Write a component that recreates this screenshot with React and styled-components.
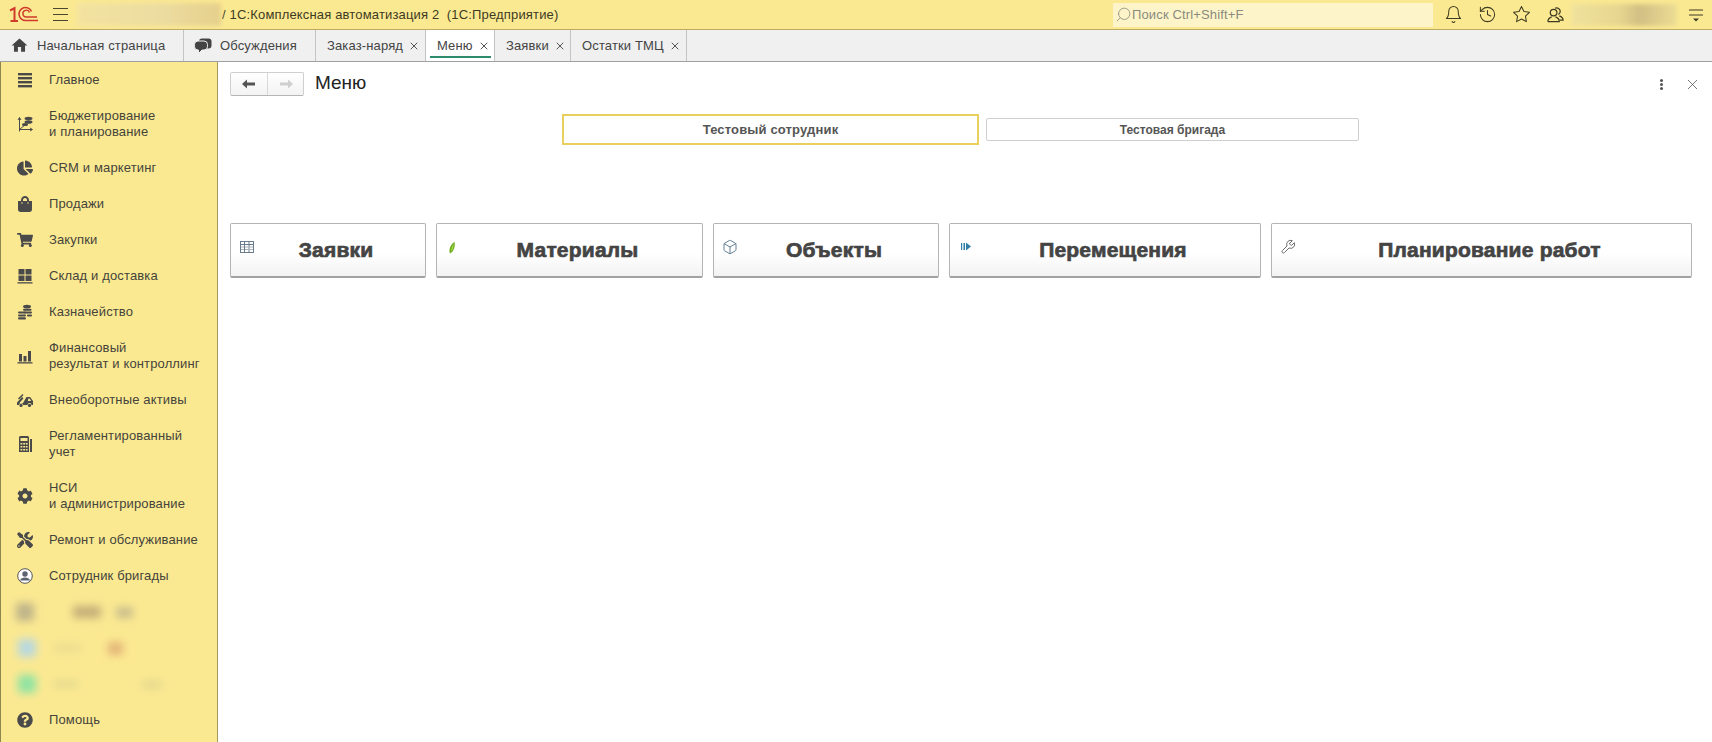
import React from "react";
import styled, { createGlobalStyle } from "styled-components";
import {
  FaChartPie, FaShoppingBag, FaShoppingCart, FaCog, FaTools, FaQuestionCircle,
} from "react-icons/fa";
import { MdHome } from "react-icons/md";
import { FiSearch, FiBell, FiStar, FiX } from "react-icons/fi";
import { LuHistory, LuWrench, LuBox } from "react-icons/lu";

const GlobalStyle = createGlobalStyle`
  html, body { margin: 0; padding: 0; height: 100%; overflow: hidden; background: #fff; }
  body { font-family: "Liberation Sans", Arial, sans-serif; font-size: 13px; color: #4a4a4a; letter-spacing: 0.14px; }
`;

const Page = styled.div`
  width: 1712px;
  height: 742px;
  display: flex;
  flex-direction: column;
  overflow: hidden;
`;

const TopBar = styled.header`
  height: 29px;
  flex: none;
  display: flex;
  align-items: center;
  background: #fbe992;
  border-bottom: 1px solid #b9ab62;
  padding-left: 8px;
  color: #3d3a22;
`;

const Logo = styled.svg`
  width: 32px;
  height: 18px;
  flex: none;
  margin-right: 13px;
`;

const Burger = styled.div`
  width: 15px;
  height: 11px;
  flex: none;
  border-top: 1px solid #4a4630;
  border-bottom: 1px solid #4a4630;
  position: relative;
  margin-right: 9px;
  &::after {
    content: "";
    position: absolute;
    left: 0;
    right: 0;
    top: 5px;
    height: 1px;
    background: #4a4630;
  }
`;

const Smudge = styled.div`
  flex: none;
  width: ${(p) => p.$w}px;
  height: ${(p) => p.$h || 23}px;
  margin-left: ${(p) => p.$left || 0}px;
  background: ${(p) => p.$bg};
  filter: blur(2px);
`;

const AppTitle = styled.div`
  margin-left: 1px;
  white-space: pre;
  flex: none;
  width: 891px;
  font-size: 13px;
  letter-spacing: 0.16px;
`;

const Search = styled.div`
  width: 320px;
  height: 24px;
  flex: none;
  display: flex;
  align-items: center;
  background: #fdf5c9;
  color: #8a8a80;
  padding-left: 2px;
  box-sizing: border-box;
  font-size: 13px;
`;

const TopIcons = styled.div`
  display: flex;
  align-items: center;
  margin-left: 11px;
  gap: 15px;
  color: #3d3a22;
  svg { width: 19px; height: 19px; display: block; stroke-width: 1.3; }
`;

const MenuLines = styled.svg`
  width: 16px;
  height: 16px;
  flex: none;
  margin-left: 11px;
`;

const TabBar = styled.nav`
  height: 31px;
  flex: none;
  display: flex;
  background: #f0f0f0;
  border-bottom: 1px solid #a0a0a0;
  font-size: 13px;
  color: #444;
`;

const Tab = styled.div`
  width: ${(p) => p.$w}px;
  flex: none;
  box-sizing: border-box;
  display: flex;
  align-items: center;
  position: relative;
  padding-left: ${(p) => p.$pad}px;
  border-right: 1px solid #c4c4c4;
  background: ${(p) => (p.$active ? "#fff" : "transparent")};
  white-space: nowrap;
  svg { flex: none; }
  ${(p) =>
    p.$active &&
    `&::after {
      content: "";
      position: absolute;
      left: 4px;
      right: 3px;
      bottom: 3px;
      height: 2px;
      background: #2e8b6a;
    }`}
`;

const HomeIcon = styled(MdHome)`
  width: 19px;
  height: 19px;
  margin-right: 8px;
  color: #444;
`;

const TabClose = styled(FiX)`
  width: 12px;
  height: 12px;
  margin-left: 5px;
  color: #555;
`;

const Body = styled.div`
  flex: 1;
  display: flex;
  min-height: 0;
`;

const Sidebar = styled.aside`
  width: 218px;
  flex: none;
  box-sizing: border-box;
  background: #fbe992;
  border-left: 1px solid #8d8450;
  border-right: 1px solid #a59a5c;
`;

const NavRow = styled.div`
  height: ${(p) => (p.$double ? 52 : 36)}px;
  display: flex;
  align-items: center;
  color: #45443a;
  line-height: 16px;
  font-size: 13px;
`;

const NavIcon = styled.div`
  width: 48px;
  flex: none;
  display: flex;
  justify-content: center;
  color: #4a4a4a;
  svg { height: 16px; display: block; width: ${(p) => p.$iconWidth || 16}px; }
`;

const BlurRow = styled.div`
  height: 36px;
  display: flex;
  align-items: center;
  padding-left: 15px;
  filter: blur(4.5px);
`;

const Blot = styled.div`
  flex: none;
  width: ${(p) => p.$w}px;
  height: ${(p) => p.$h}px;
  margin-left: ${(p) => p.$gap}px;
  background: ${(p) => p.$bg};
`;

const Main = styled.main`
  flex: 1;
  min-width: 0;
  background: #fff;
  padding-left: 12px;
`;

const FormHeader = styled.div`
  height: 24px;
  margin-top: 10px;
  display: flex;
  align-items: center;
`;

const NavButtons = styled.div`
  width: 74px;
  height: 24px;
  flex: none;
  box-sizing: border-box;
  display: flex;
  border: 1px solid #cfcfcf;
  border-bottom-color: #b5b5b5;
  border-radius: 2px;
  background: linear-gradient(#fff, #f3f3f3);
  margin-right: 11px;
`;

const ArrowCell = styled.div`
  flex: ${(p) => p.$grow};
  display: flex;
  align-items: center;
  justify-content: center;
  & + & { border-left: 1px solid #d8d8d8; }
  color: ${(p) => p.$color};
`;

const FormTitle = styled.h1`
  margin: -2px 0 0;
  font-size: 19px;
  font-weight: 400;
  letter-spacing: 0;
  color: #222;
  flex: 1;
`;

const FormTools = styled.div`
  display: flex;
  align-items: center;
  gap: 21px;
  margin-right: 11px;
  color: #444;
`;

const Dots = styled.div`
  width: 3px;
  height: 3px;
  border-radius: 50%;
  background: #555;
  box-shadow: 0 -4px 0 #555, 0 4px 0 #555;
`;

const ToggleRow = styled.div`
  margin: 18px 0 0 332px;
  height: 31px;
  display: flex;
  align-items: center;
  gap: 7px;
`;

const Toggle = styled.div`
  box-sizing: border-box;
  flex: none;
  display: flex;
  align-items: center;
  justify-content: center;
  width: ${(p) => (p.$current ? 417 : 373)}px;
  height: ${(p) => (p.$current ? 31 : 23)}px;
  border: ${(p) => (p.$current ? "2px solid #e9cf5b" : "1px solid #cfcfcf")};
  border-radius: ${(p) => (p.$current ? 0 : 2)}px;
  font-size: ${(p) => (p.$current ? 13 : 12)}px;
  font-weight: 700;
  letter-spacing: ${(p) => (p.$current ? 0.15 : 0)}px;
  color: #555;
`;

const ActionRow = styled.div`
  margin-top: 78px;
  display: grid;
  grid-template-columns: 196px 267px 226px 312px 421px;
  column-gap: 10px;
`;

const ActionButton = styled.button`
  height: 55px;
  box-sizing: border-box;
  display: flex;
  align-items: center;
  padding: 0 8px 0 0;
  border: 1px solid #b4b4b4;
  border-bottom: 2px solid #a2a2a2;
  border-radius: 2px;
  background: linear-gradient(#fff 55%, #f3f3f3);
  font-family: "Liberation Sans", Arial, sans-serif;
  font-size: 21px;
  font-weight: 700;
  letter-spacing: 0.2px;
  color: #444;
  -webkit-text-stroke: 0.7px #444;
`;

const ActionIcon = styled.span`
  width: 16px;
  height: 16px;
  margin: 0 0 7px 8px;
  flex: none;
  display: flex;
  align-items: center;
  justify-content: center;
  -webkit-text-stroke: 0;
  svg { width: 16px; height: 16px; display: block; }
`;

const ActionLabel = styled.span`
  flex: 1;
  text-align: center;
`;

const BudgetIcon = () => (
  <svg viewBox="0 0 16 16" fill="none" stroke="currentColor">
    <path d="M2.500 15.500V2M1 4L2.500 1.500 4 4M2.500 13.500H15M13 12L15.500 13.500 13 15M2.500 13.500L8.500 8.500" />
    <ellipse cx="11.500" cy="2.500" rx="4" ry="1.800" fill="currentColor" stroke="none" />
    <ellipse cx="11.500" cy="6" rx="4" ry="1.800" fill="currentColor" stroke="none" />
    <ellipse cx="8" cy="8.500" rx="3" ry="1.500" fill="currentColor" stroke="none" />
  </svg>
);

const BarsIcon = () => (
  <svg viewBox="0 0 16 16" fill="currentColor">
    <rect x="1" y="1" width="14" height="2.400" />
    <rect x="1" y="5" width="14" height="2.400" />
    <rect x="1" y="9" width="14" height="2.400" />
    <rect x="1" y="13" width="14" height="2.400" />
  </svg>
);

const WarehouseIcon = () => (
  <svg viewBox="0 0 16 16" fill="currentColor">
    <rect x="1.500" y="1" width="6" height="5.500" />
    <rect x="8.500" y="1" width="6" height="5.500" />
    <rect x="1.500" y="7.500" width="6" height="5.500" />
    <rect x="8.500" y="7.500" width="6" height="5.500" />
    <rect x="0.500" y="14.200" width="15" height="1.300" />
  </svg>
);

const CoinsIcon = () => (
  <svg viewBox="0 0 16 16" fill="currentColor">
    <ellipse cx="10" cy="2.600" rx="4" ry="1.900" />
    <rect x="6" y="4.800" width="8.500" height="2" rx="1" />
    <rect x="7" y="7.600" width="8" height="2" rx="1" />
    <rect x="1" y="7.400" width="8" height="2.200" rx="1.100" />
    <rect x="1" y="10.400" width="8" height="2.200" rx="1.100" />
    <rect x="1" y="13.300" width="8" height="2.200" rx="1.100" />
    <rect x="10" y="10.600" width="5" height="1.800" rx="0.900" />
  </svg>
);

const ResultIcon = () => (
  <svg viewBox="0 0 16 16" fill="currentColor">
    <rect x="2" y="6" width="3" height="7.500" />
    <rect x="6.500" y="8" width="3" height="5.500" />
    <rect x="11" y="3" width="3" height="10.500" />
    <rect x="0.500" y="14.200" width="15" height="1.300" />
  </svg>
);

const AssetsIcon = () => (
  <svg viewBox="0 0 18 16" fill="currentColor">
    <path d="M1 13v-2.500L6 5l1.500 1.200L3.500 11H7l3.500-6h3.600l2.900 4v4h-1.500a2 2 0 0 0-4 0H7a2 2 0 0 0-4 0zM11.800 9h3.400l-1.600-2.600h-1.200z" />
    <path d="M2 6.500L6.500 2l1 1L3 7.500z" />
    <circle cx="5" cy="13.400" r="1.600" />
    <circle cx="13.500" cy="13.400" r="1.600" />
  </svg>
);

const CalcIcon = () => (
  <svg viewBox="0 0 16 16" fill="currentColor">
    <path fillRule="evenodd" d="M2 1.500A1.500 1.500 0 0 1 3.500 0h7A1.500 1.500 0 0 1 12 1.500V16H2zM3.500 2v3h7V2z" />
    <path d="M13 3h2v13h-2z" />
    <g fill="#fbe992">
      <rect x="3.500" y="7" width="1.800" height="1.500" />
      <rect x="6.200" y="7" width="1.800" height="1.500" />
      <rect x="8.800" y="7" width="1.800" height="1.500" />
      <rect x="3.500" y="10" width="1.800" height="1.500" />
      <rect x="6.200" y="10" width="1.800" height="1.500" />
      <rect x="8.800" y="10" width="1.800" height="1.500" />
      <rect x="3.500" y="13" width="1.800" height="1.500" />
      <rect x="6.200" y="13" width="1.800" height="1.500" />
      <rect x="8.800" y="13" width="1.800" height="1.500" />
    </g>
  </svg>
);

const StaffIcon = () => (
  <svg viewBox="0 0 16 16">
    <circle cx="8" cy="8" r="7.300" fill="#fff" stroke="#555" strokeWidth="1" />
    <circle cx="8" cy="6" r="2.700" fill="#5b6470" />
    <path d="M3 12.500c.6-2.200 2.500-3 5-3s4.400.8 5 3z" fill="#5b6470" />
  </svg>
);

const TableIcon = () => (
  <svg viewBox="0 0 16 16" fill="none" stroke="#6b7c8c">
    <rect x="1.500" y="2.500" width="13" height="11" />
    <path d="M1.500 5.500H14.500M5.500 2.500V13.500M10 2.500V13.500" />
    <path d="M2 8H5M2 10.500H5M6 8H9.500M6 10.500H9.500M10.500 8H14M10.500 10.500H14" stroke="#a9b4bd" />
  </svg>
);

const LeafIcon = () => (
  <svg viewBox="0 0 16 16">
    <path d="M5 14.500c-1.500-3 0-9 4.500-11.500 1 4-.5 9.500-4.500 11.500z" fill="#6fae1e" />
    <path d="M6.500 12.500c-.5-2 .5-5.500 2-7.500 .3 2-.5 5.500-2 7.500z" fill="#a6d94f" />
  </svg>
);

const MoveIcon = () => (
  <svg viewBox="0 0 16 16" fill="#2f7fa8">
    <rect x="3" y="4" width="1.200" height="7" />
    <rect x="5.500" y="4" width="1.500" height="7" />
    <path d="M8 3.500L13 7.500 8 11.500z" />
  </svg>
);

const UsersIcon = () => (
  <svg viewBox="0 0 20 20" fill="none" stroke="currentColor">
    <circle cx="8" cy="8" r="3.500" />
    <path d="M2 17.500c0-3 2-4.300 4-5M10 12.500c2 .7 4 2 4 5H2" />
    <path d="M9.500 3.500a3.500 3.500 0 1 1 3.500 6.500M14 11.500c2 .7 4 1.800 4 4.500h-3.500" />
  </svg>
);

const LogoMark = () => (
  <Logo viewBox="0 0 32 18" fill="none" stroke="#cf3a2c">
    <path d="M2 4.500L6.500 2.200V15.500M2.500 15H10" strokeWidth="2" />
    <path d="M23.500 5.500A6.500 6.500 0 1 0 18 14.500H30" strokeWidth="1.600" />
    <path d="M21.500 6.500A3.400 3.400 0 1 0 18.500 11H29" strokeWidth="1.400" />
  </Logo>
);

function ChatIcon() {
  return (
    <svg width="18" height="16" viewBox="0 0 18 16" fill="#444" style={{ marginRight: 8 }}>
      <rect x="5" y="0.500" width="12.500" height="10" rx="3" />
      <path d="M4 3h6a3.500 3.500 0 0 1 3.500 3.500v2A3.500 3.500 0 0 1 10 12H8l-3.500 3.500V12H4A3.500 3.500 0 0 1 .5 8.500v-2A3.500 3.500 0 0 1 4 3z" stroke="#f0f0f0" />
    </svg>
  );
}

const navTop = [
  { icon: <BarsIcon />, label: ["Главное"] },
  { icon: <BudgetIcon />, label: ["Бюджетирование", "и планирование"] },
  { icon: <FaChartPie />, label: ["CRM и маркетинг"] },
  { icon: <FaShoppingBag />, label: ["Продажи"] },
  { icon: <FaShoppingCart />, label: ["Закупки"] },
  { icon: <WarehouseIcon />, label: ["Склад и доставка"] },
  { icon: <CoinsIcon />, label: ["Казначейство"] },
  { icon: <ResultIcon />, label: ["Финансовый", "результат и контроллинг"] },
  { icon: <AssetsIcon />, iconWidth: 18, label: ["Внеоборотные активы"] },
  { icon: <CalcIcon />, label: ["Регламентированный", "учет"] },
  { icon: <FaCog />, label: ["НСИ", "и администрирование"] },
  { icon: <FaTools />, label: ["Ремонт и обслуживание"] },
  { icon: <StaffIcon />, label: ["Сотрудник бригады"] },
];

const blurred = [
  [[18, 18, "#bfb48a", 0], [28, 12, "#c4ad78", 39], [17, 11, "#c9bd8c", 15]],
  [[18, 18, "#b8d8e0", 2], [27, 6, "#e6d98e", 18], [15, 13, "#e4b478", 27]],
  [[18, 18, "#8fe3a3", 2], [24, 6, "#e0d68e", 18], [20, 7, "#e0d68e", 64]],
];

const tabs = [
  { w: 184, pad: 10, icon: <HomeIcon />, text: "Начальная страница" },
  { w: 132, pad: 10, icon: <ChatIcon />, text: "Обсуждения" },
  { w: 110, pad: 11, text: "Заказ-наряд", close: true },
  { w: 69, pad: 11, text: "Меню", close: true, active: true },
  { w: 76, pad: 11, text: "Заявки", close: true },
  { w: 116, pad: 11, text: "Остатки ТМЦ", close: true },
];

const actions = [
  { text: "Заявки", icon: <TableIcon /> },
  { text: "Материалы", icon: <LeafIcon /> },
  { text: "Объекты", icon: <LuBox color="#4d6c84" strokeWidth={1.3} /> },
  { text: "Перемещения", icon: <MoveIcon /> },
  { text: "Планирование работ", icon: <LuWrench color="#555" strokeWidth={1.3} /> },
];

const App = () => {
  return (
    <Page>
      <GlobalStyle />
      <TopBar>
        <LogoMark />
        <Burger />
        <Smudge $w={144} $bg="linear-gradient(90deg, #f3e3a0, #ecdca0 60%, #e6d08c)" />
        <AppTitle>{"/ 1С:Комплексная автоматизация 2  (1С:Предприятие)"}</AppTitle>
        <Search>
          <FiSearch size={17} strokeWidth={1.2} color="#8f8f80" style={{ transform: "scaleX(-1)" }} />
          Поиск Ctrl+Shift+F
        </Search>
        <TopIcons>
          <FiBell />
          <LuHistory />
          <FiStar />
          <UsersIcon />
        </TopIcons>
        <Smudge $w={106} $h={22} $left={6} $bg="linear-gradient(90deg, #f0e29c, #e6d68f 45%, #d2bf84 65%, #ecdd94)" />
        <MenuLines viewBox="0 0 16 16" fill="none" stroke="#3d3a22">
          <path d="M1 3H15M1 8H15" />
          <path d="M5 11.500H11L8 14.500z" fill="#3d3a22" stroke="none" />
        </MenuLines>
      </TopBar>
      <TabBar>
        {tabs.map((t) => (
          <Tab key={t.text} $w={t.w} $pad={t.pad} $active={t.active}>
            {t.icon}
            {t.text}
            {t.close && <TabClose />}
          </Tab>
        ))}
      </TabBar>
      <Body>
        <Sidebar>
          {navTop.map((n) => (
            <NavRow key={n.label[0]} $double={n.label.length > 1}>
              <NavIcon $iconWidth={n.iconWidth}>{n.icon}</NavIcon>
              <div>
                {n.label.map((line) => (
                  <div key={line}>{line}</div>
                ))}
              </div>
            </NavRow>
          ))}
          {blurred.map((row, i) => (
            <BlurRow key={i}>
              {row.map(([w, h, bg, gap], j) => (
                <Blot key={j} $w={w} $h={h} $bg={bg} $gap={gap} />
              ))}
            </BlurRow>
          ))}
          <NavRow>
            <NavIcon><FaQuestionCircle /></NavIcon>
            <div>Помощь</div>
          </NavRow>
        </Sidebar>
        <Main>
          <FormHeader>
            <NavButtons>
              <ArrowCell $grow={38} $color="#555">
                <svg width="14" height="10" viewBox="0 0 14 10" fill="currentColor"><path d="M0 5l5-4.500V3.500h8v3H5v3z" /></svg>
              </ArrowCell>
              <ArrowCell $grow={36} $color="#cfcfcf">
                <svg width="14" height="10" viewBox="0 0 14 10" fill="currentColor"><path d="M14 5L9 .5V3.500H1v3h8v3z" /></svg>
              </ArrowCell>
            </NavButtons>
            <FormTitle>Меню</FormTitle>
            <FormTools>
              <Dots />
              <FiX size={17} strokeWidth={1} />
            </FormTools>
          </FormHeader>
          <ToggleRow>
            <Toggle $current>Тестовый сотрудник</Toggle>
            <Toggle>Тестовая бригада</Toggle>
          </ToggleRow>
          <ActionRow>
            {actions.map((a) => (
              <ActionButton key={a.text}>
                <ActionIcon>{a.icon}</ActionIcon>
                <ActionLabel>{a.text}</ActionLabel>
              </ActionButton>
            ))}
          </ActionRow>
        </Main>
      </Body>
    </Page>
  );
};

export default App;
